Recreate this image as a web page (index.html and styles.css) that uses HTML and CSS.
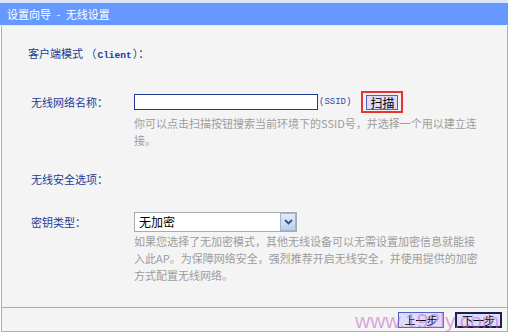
FILE: index.html
```html
<!DOCTYPE html>
<html lang="zh-CN">
<head>
<meta charset="utf-8">
<title>设置向导 - 无线设置</title>
<link rel="stylesheet" href="styles.css">
</head>
<body>
<div class="panel">
  <div class="title">设置向导 - 无线设置</div>
  <div class="content">
    <div class="heading">客户端模式 （<span class="mono">Client</span>）：</div>

    <div class="row row-ssid">
      <div class="label label-tall">无线网络名称：</div>
      <div class="field">
        <div class="line">
          <span class="input"></span><span class="ssid">(SSID)</span><span class="mark"><span class="btn btn-scan">扫描</span></span>
        </div>
        <p class="hint">你可以点击扫描按钮搜索当前环境下的SSID号，并选择一个用以建立连接。</p>
      </div>
    </div>

    <div class="heading heading-sec">无线安全选项：</div>

    <div class="row row-key">
      <div class="label label-key">密钥类型：</div>
      <div class="field">
        <div class="select">
          <span class="select-text">无加密</span>
          <span class="select-arrow"><svg width="9" height="6" viewBox="0 0 9 6"><path d="M1 1 L4.5 4.5 L8 1" fill="none" stroke="#3d4f73" stroke-width="1.8"/></svg></span>
        </div>
        <p class="hint hint-key">如果您选择了无加密模式，其他无线设备可以无需设置加密信息就能接入此AP。为保障网络安全，强烈推荐开启无线安全，并使用提供的加密方式配置无线网络。</p>
      </div>
    </div>
  </div>
  <div class="footer">
    <button class="btn btn-nav">上一步</button>
    <button class="btn btn-nav btn-primary">下一步</button>
    <span class="watermark">www.192ly.com</span>
  </div>
</div>
</body>
</html>
```

FILE: styles.css
```css
* { box-sizing: border-box; }

body {
  margin: 0;
  background: #ffffff;
  font-family: "Noto Sans CJK SC", sans-serif;
  font-size: 11px;
  color: #000;
}

.panel {
  width: 508px;
}

.title {
  height: 26px;
  background: #6699ff;
  border-top: 3px solid #dde6f9;
  border-bottom: 1px solid #e2eaff;
  color: #ffffff;
  line-height: 22px;
  padding-left: 7px;
  word-spacing: 3px;
}

.content {
  margin-left: 1px;
  width: 507px;
  background: #f4f4f4;
  border-left: 1px solid #f99d40;
  border-right: 1px solid #f99d40;
  padding: 19px 0 23px 0;
}

.heading {
  height: 16px;
  line-height: 16px;
  padding-left: 26px;
  color: #1b3b94;
}

.mono {
  font-family: "Liberation Mono", monospace;
  font-size: 9.5px;
  font-weight: bold;
  padding: 0 1px;
}

.heading-sec {
  padding-left: 29px;
  margin-top: 22px;
}

.row {
  display: grid;
  grid-template-columns: 103px 1fr;
  padding-left: 29px;
}

.row-ssid { margin-top: 30px; }
.row-key { margin-top: 25px; }

.label {
  color: #1b3b94;
}

.label-tall { line-height: 22px; }
.label-key { line-height: 20px; }

.line {
  display: flex;
  align-items: center;
  height: 22px;
}

.input {
  display: block;
  width: 184px;
  height: 16px;
  background: #ffffff;
  border: 1px solid #1f3a8f;
}

.ssid {
  margin-left: 1px;
  font-family: "Liberation Mono", monospace;
  font-size: 9px;
  color: #2a4aa8;
}

.mark {
  margin-left: 10px;
  width: 42px;
  height: 22px;
  border: 2px solid #e8332e;
  display: flex;
  align-items: center;
  justify-content: center;
}

.btn {
  font-family: "Noto Sans CJK SC", sans-serif;
  font-size: 11px;
  color: #000;
  background: #dcdcfc;
  border: 1px solid #4b63c6;
  padding: 0;
  display: flex;
  align-items: center;
  justify-content: center;
}

.btn-scan {
  width: 32px;
  height: 15px;
  font-size: 12px;
}

.hint {
  margin: 2px 0 0 0;
  width: 347px;
  line-height: 17px;
  color: #9d9d9d;
}

.hint-key { margin-top: 1px; }

.select {
  display: flex;
  width: 163px;
  height: 20px;
  background: #ffffff;
  border: 1px solid #a5abb3;
}

.select-text {
  flex: 1;
  padding-left: 4px;
  line-height: 18px;
  font-size: 12px;
}

.select-arrow {
  width: 16px;
  height: 18px;
  background: linear-gradient(#e2ebf9, #bccfee);
  border: 1px solid #9db4dc;
  display: flex;
  align-items: center;
  justify-content: center;
}

.footer {
  position: relative;
  margin-left: 1px;
  width: 507px;
  height: 25px;
  background: #f4f4f4;
  border: 1px solid #f99d40;
  display: flex;
  justify-content: flex-end;
  align-items: flex-start;
  gap: 11px;
  padding: 4px 5px 0 0;
}

.btn-nav {
  width: 46px;
  height: 16px;
}

.btn-primary {
  width: 47px;
  border: 2px solid #1e1e52;
}

.watermark {
  position: absolute;
  left: 353px;
  top: 2px;
  font-family: "Liberation Sans", Arial, sans-serif;
  font-size: 21px;
  line-height: 21px;
  color: rgba(190, 100, 200, 0.55);
  pointer-events: none;
  white-space: nowrap;
}
```
